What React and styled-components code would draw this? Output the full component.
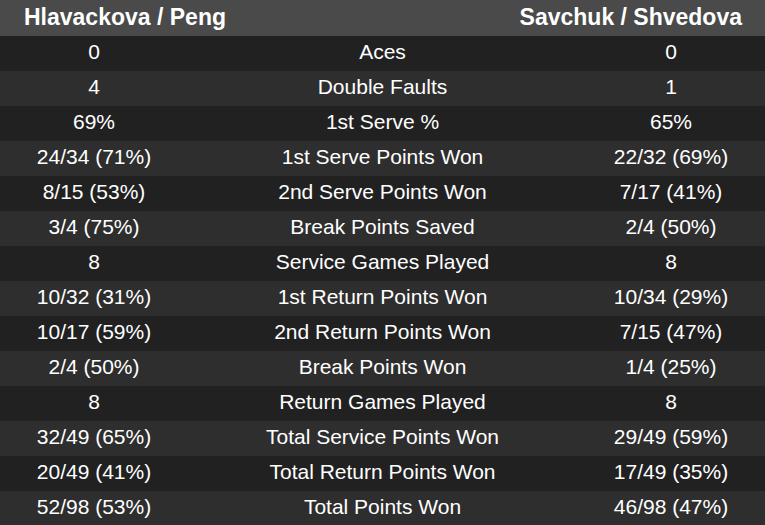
import React from "react";
import styled, { createGlobalStyle } from "styled-components";

const GlobalStyle = createGlobalStyle`
  body {
    margin: 0;
    background: #000000;
    font-family: "Liberation Sans", Arial, sans-serif;
  }
`;

const teams = ["Hlavackova / Peng", "Savchuk / Shvedova"];

const stats = [
  ["0", "Aces", "0"],
  ["4", "Double Faults", "1"],
  ["69%", "1st Serve %", "65%"],
  ["24/34 (71%)", "1st Serve Points Won", "22/32 (69%)"],
  ["8/15 (53%)", "2nd Serve Points Won", "7/17 (41%)"],
  ["3/4 (75%)", "Break Points Saved", "2/4 (50%)"],
  ["8", "Service Games Played", "8"],
  ["10/32 (31%)", "1st Return Points Won", "10/34 (29%)"],
  ["10/17 (59%)", "2nd Return Points Won", "7/15 (47%)"],
  ["2/4 (50%)", "Break Points Won", "1/4 (25%)"],
  ["8", "Return Games Played", "8"],
  ["32/49 (65%)", "Total Service Points Won", "29/49 (59%)"],
  ["20/49 (41%)", "Total Return Points Won", "17/49 (35%)"],
  ["52/98 (53%)", "Total Points Won", "46/98 (47%)"],
];

const Table = styled.div`
  width: 765px;
  height: 525px;
  overflow: hidden;
  display: flex;
  flex-direction: column;
  color: #ffffff;
`;

const HeaderRow = styled.div`
  flex: 0 0 36px;
  box-sizing: border-box;
  display: flex;
  align-items: center;
  justify-content: space-between;
  padding: 0 23px 1px 24px;
  background: #4a4a4a;
  font-size: 23px;
  font-weight: bold;
`;

const Row = styled.div`
  flex: 0 0 35px;
  box-sizing: border-box;
  padding-bottom: 3px;
  display: grid;
  grid-template-columns: 188px 1fr 188px;
  align-items: center;
  background: ${(p) => (p.$odd ? "#2e2e2e" : "#212121")};
  font-size: 21px;
`;

const Cell = styled.div`
  text-align: center;
  white-space: nowrap;
`;

export default function App() {
  return (
    <>
      <GlobalStyle />
      <Table>
        <HeaderRow>
          <span>{teams[0]}</span>
          <span>{teams[1]}</span>
        </HeaderRow>
        {stats.map((s, i) => (
          <Row key={s[1]} $odd={i % 2 === 1}>
            <Cell>{s[0]}</Cell>
            <Cell>{s[1]}</Cell>
            <Cell>{s[2]}</Cell>
          </Row>
        ))}
      </Table>
    </>
  );
}
